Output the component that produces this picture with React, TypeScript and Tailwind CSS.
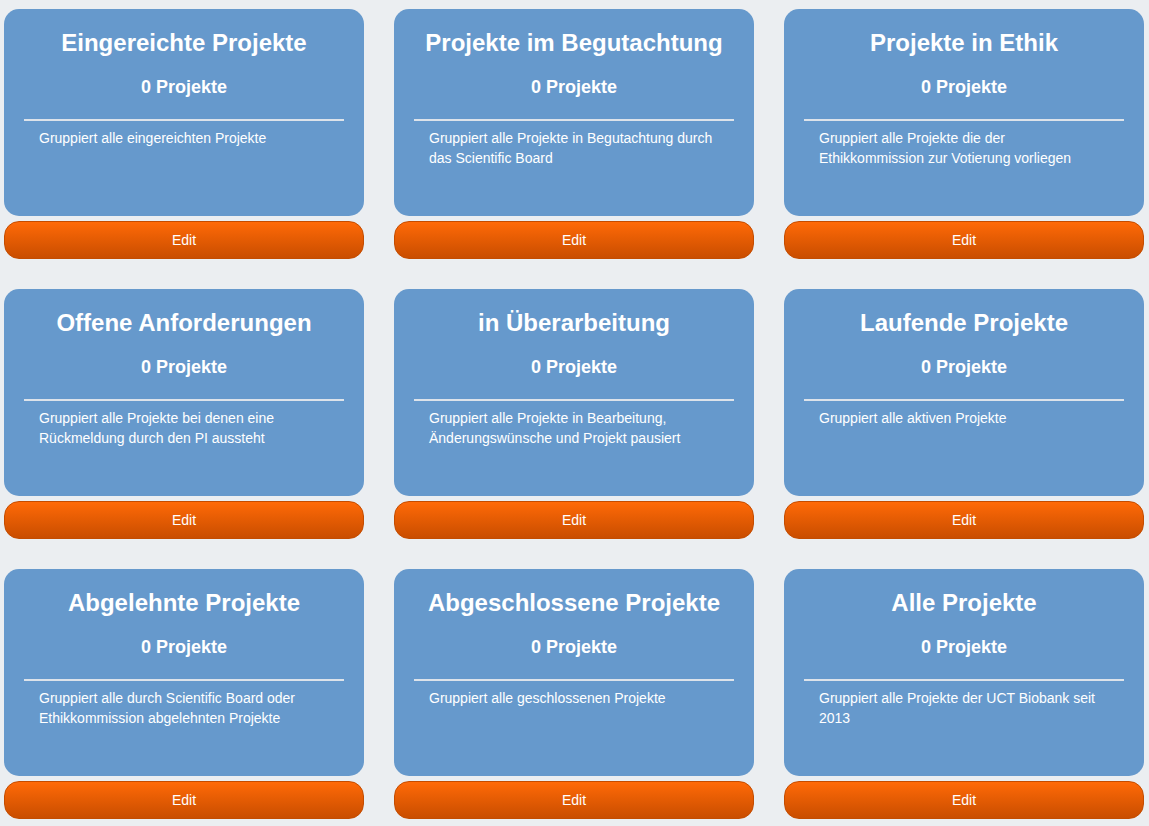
import React from 'react';

const groups = [
  { title: "Eingereichte Projekte", desc: "Gruppiert alle eingereichten Projekte" },
  { title: "Projekte im Begutachtung", desc: "Gruppiert alle Projekte in Begutachtung durch das Scientific Board" },
  { title: "Projekte in Ethik", desc: "Gruppiert alle Projekte die der Ethikkommission zur Votierung vorliegen" },
  { title: "Offene Anforderungen", desc: "Gruppiert alle Projekte bei denen eine Rückmeldung durch den PI aussteht" },
  { title: "in Überarbeitung", desc: "Gruppiert alle Projekte in Bearbeitung, Änderungswünsche und Projekt pausiert" },
  { title: "Laufende Projekte", desc: "Gruppiert alle aktiven Projekte" },
  { title: "Abgelehnte Projekte", desc: "Gruppiert alle durch Scientific Board oder Ethikkommission abgelehnten Projekte" },
  { title: "Abgeschlossene Projekte", desc: "Gruppiert alle geschlossenen Projekte" },
  { title: "Alle Projekte", desc: "Gruppiert alle Projekte der UCT Biobank seit 2013" },
];

const App: React.FC = () => {
  return (
    <div className="min-h-[826px] bg-[#ebeef1] px-[4px] pt-[9px] font-['Liberation_Sans',Arial,sans-serif]">
      <div className="grid grid-cols-[360px_360px_360px] gap-x-[30px] gap-y-[30px]">
        {groups.map((g, i) => (
          <div key={i} className="flex flex-col">
            <div className="h-[207px] rounded-[15px] bg-[#6699cc] pt-[20px] text-white">
              <h2 className="text-center text-[24px] font-bold leading-[28px]">{g.title}</h2>
              <p className="mt-[19px] text-center text-[18px] font-bold leading-[22px]">0 Projekte</p>
              <hr className="mx-[20px] mt-[21px] border-0 border-t-2 border-[#dde3ea]" />
              <p className="mt-[7px] px-[35px] text-[14px] leading-[20px]">{g.desc}</p>
            </div>
            <button className="mt-[5px] h-[38px] rounded-[15px] border border-[#c44c00] bg-gradient-to-b from-[#ff6a08] to-[#c94d00] text-[14px] text-white">
              Edit
            </button>
          </div>
        ))}
      </div>
    </div>
  );
};

export default App;
